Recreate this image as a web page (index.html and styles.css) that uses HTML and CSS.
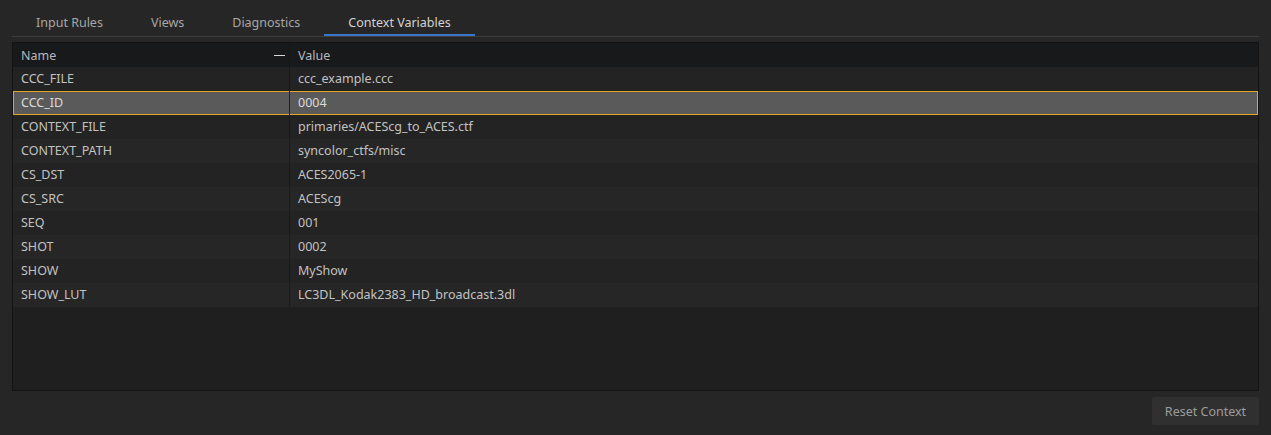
FILE: index.html
```html
<!DOCTYPE html>
<html>
<head>
<meta charset="utf-8">
<link rel="stylesheet" href="styles.css">
</head>
<body>
<div class="app">
  <div class="tabs">
    <div class="tab">Input Rules</div>
    <div class="tab">Views</div>
    <div class="tab">Diagnostics</div>
    <div class="tab active">Context Variables</div>
  </div>
  <div class="table">
    <div class="row head">
      <div class="cell name">Name<span class="sort"></span></div>
      <div class="cell value">Value</div>
    </div>
    <div class="row odd"><div class="cell name">CCC_FILE</div><div class="cell value">ccc_example.ccc</div></div>
    <div class="row even selected"><div class="cell name">CCC_ID</div><div class="cell value">0004</div></div>
    <div class="row odd"><div class="cell name">CONTEXT_FILE</div><div class="cell value">primaries/ACEScg_to_ACES.ctf</div></div>
    <div class="row even"><div class="cell name">CONTEXT_PATH</div><div class="cell value">syncolor_ctfs/misc</div></div>
    <div class="row odd"><div class="cell name">CS_DST</div><div class="cell value">ACES2065-1</div></div>
    <div class="row even"><div class="cell name">CS_SRC</div><div class="cell value">ACEScg</div></div>
    <div class="row odd"><div class="cell name">SEQ</div><div class="cell value">001</div></div>
    <div class="row even"><div class="cell name">SHOT</div><div class="cell value">0002</div></div>
    <div class="row odd"><div class="cell name">SHOW</div><div class="cell value">MyShow</div></div>
    <div class="row even"><div class="cell name">SHOW_LUT</div><div class="cell value">LC3DL_Kodak2383_HD_broadcast.3dl</div></div>
  </div>
  <div class="footer">
    <button class="btn">Reset Context</button>
  </div>
</div>
</body>
</html>
```

FILE: styles.css
```css
* { box-sizing: border-box; }
html, body {
  margin: 0;
  padding: 0;
  background: #262626;
  width: 1271px;
  height: 435px;
  overflow: hidden;
  font-family: "Noto Sans", "DejaVu Sans", sans-serif;
  font-size: 12.5px;
}
.app {
  padding: 8px 12px 0 12px;
  width: 1271px;
}
.tabs {
  display: flex;
  height: 29px;
  border-bottom: 1px solid #3d3d3d;
  width: 1247px;
}
.tab {
  padding: 0 24px;
  height: 28px;
  line-height: 29px;
  color: #a6a6a6;
  border-bottom: 2px solid transparent;
}
.tab.active {
  color: #d2d2d2;
  border-bottom-color: #3a74c7;
}
.table {
  margin-top: 5px;
  width: 1247px;
  height: 349px;
  border: 1px solid #131313;
  background: #1f1f1f;
}
.row {
  display: flex;
  height: 24px;
  line-height: 24px;
  color: #c2c2c2;
}
.row.head {
  background: #17191b;
  color: #b8b8b8;
  line-height: 26px;
}
.row.odd { background: #232323; }
.row.even { background: #262626; }
.cell {
  padding-left: 8px;
  white-space: nowrap;
}
.cell.name {
  width: 277px;
  border-right: 1px solid #1a1a1a;
  position: relative;
}
.row.head .cell.name { border-right-color: #141618; }
.cell.value { flex: 1; padding-left: 8px; }
.sort {
  position: absolute;
  right: 4px;
  top: 12px;
  width: 11px;
  height: 1px;
  background: #d6d6d6;
}
.row.selected {
  background: #5a5a5a;
  outline: 1px solid #e2a722;
  outline-offset: -1px;
  color: #dadada;
}
.row.selected .cell.name { border-right-color: #202020; }
.footer {
  display: flex;
  justify-content: flex-end;
  padding-top: 6px;
  width: 1247px;
}
.btn {
  width: 107px;
  height: 28px;
  background: #303030;
  border: none;
  border-radius: 2px;
  color: #9c9c9c;
  font-family: "Noto Sans", "DejaVu Sans", sans-serif;
  font-size: 12.5px;
  padding: 0;
}
```
